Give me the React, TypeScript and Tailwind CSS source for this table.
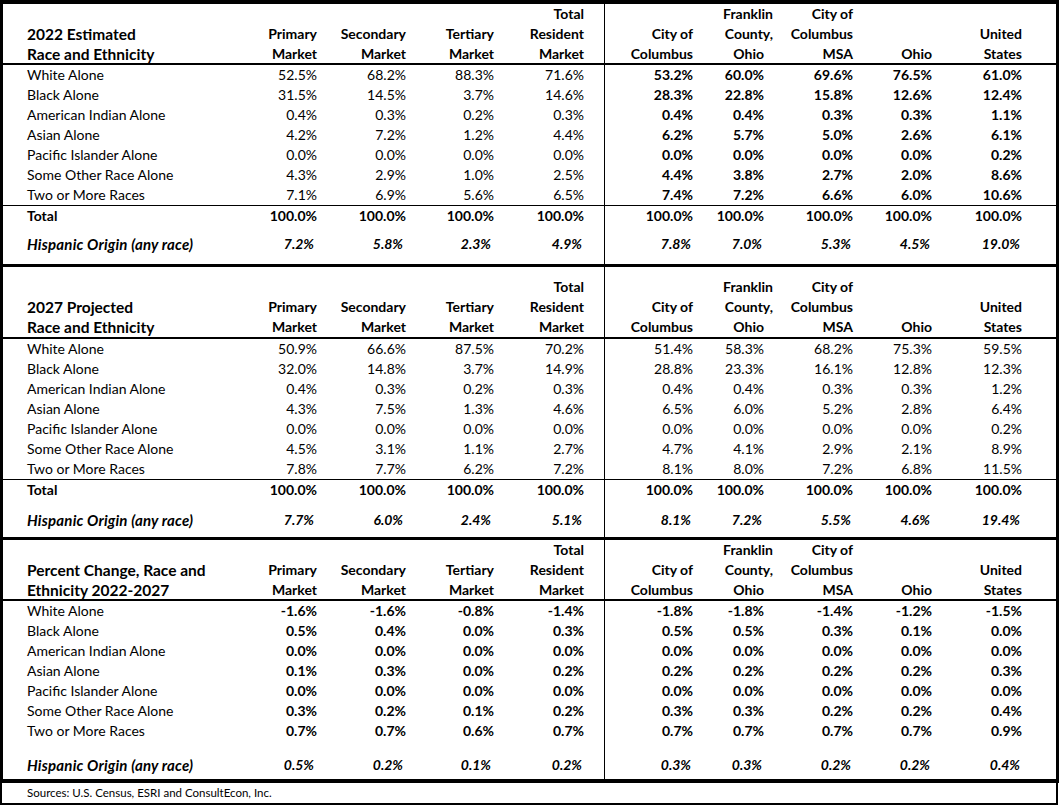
import React from "react";

const GRID =
  "grid grid-cols-[234px_85px_89px_88px_106px_93px_71px_89px_79px_119px]";

const PR = [
  "pr-[5px]",
  "pr-[5px]",
  "pr-[5px]",
  "pr-[20px] border-r border-black",
  "pr-[5px]",
  "pr-[5px]",
  "pr-[5px]",
  "pr-[5px]",
  "pr-[34px]",
];

const PR_IT = [
  "pr-[8px]",
  "pr-[8px]",
  "pr-[8px]",
  "pr-[22px] border-r border-black",
  "pr-[7px]",
  "pr-[7px]",
  "pr-[7px]",
  "pr-[7px]",
  "pr-[36px]",
];

const HEADERS: string[][] = [
  ["", "Primary", "Market"],
  ["", "Secondary", "Market"],
  ["", "Tertiary", "Market"],
  ["Total", "Resident", "Market"],
  ["", "City of", "Columbus"],
  ["Franklin", "County,", "Ohio"],
  ["City of", "Columbus", "MSA"],
  ["", "", "Ohio"],
  ["", "United", "States"],
];

const LABELS = [
  "White Alone",
  "Black Alone",
  "American Indian Alone",
  "Asian Alone",
  "Pacific Islander Alone",
  "Some Other Race Alone",
  "Two or More Races",
];

type Section = {
  title: [string, string];
  headerH: string;
  rows: string[][];
  boldLeft: boolean;
  boldRight: boolean;
  total: boolean;
  hisp: string[];
  hispH: string;
  hispPt: string;
};

const SECTIONS: Section[] = [
  {
    title: ["2022 Estimated", "Race and Ethnicity"],
    headerH: "h-[61px]",
    rows: [
      ["52.5%", "68.2%", "88.3%", "71.6%", "53.2%", "60.0%", "69.6%", "76.5%", "61.0%"],
      ["31.5%", "14.5%", "3.7%", "14.6%", "28.3%", "22.8%", "15.8%", "12.6%", "12.4%"],
      ["0.4%", "0.3%", "0.2%", "0.3%", "0.4%", "0.4%", "0.3%", "0.3%", "1.1%"],
      ["4.2%", "7.2%", "1.2%", "4.4%", "6.2%", "5.7%", "5.0%", "2.6%", "6.1%"],
      ["0.0%", "0.0%", "0.0%", "0.0%", "0.0%", "0.0%", "0.0%", "0.0%", "0.2%"],
      ["4.3%", "2.9%", "1.0%", "2.5%", "4.4%", "3.8%", "2.7%", "2.0%", "8.6%"],
      ["7.1%", "6.9%", "5.6%", "6.5%", "7.4%", "7.2%", "6.6%", "6.0%", "10.6%"],
    ],
    boldLeft: false,
    boldRight: true,
    total: true,
    hisp: ["7.2%", "5.8%", "2.3%", "4.9%", "7.8%", "7.0%", "5.3%", "4.5%", "19.0%"],
    hispH: "h-[38px]",
    hispPt: "pt-[8px]",
  },
  {
    title: ["2027 Projected", "Race and Ethnicity"],
    headerH: "h-[72px]",
    rows: [
      ["50.9%", "66.6%", "87.5%", "70.2%", "51.4%", "58.3%", "68.2%", "75.3%", "59.5%"],
      ["32.0%", "14.8%", "3.7%", "14.9%", "28.8%", "23.3%", "16.1%", "12.8%", "12.3%"],
      ["0.4%", "0.3%", "0.2%", "0.3%", "0.4%", "0.4%", "0.3%", "0.3%", "1.2%"],
      ["4.3%", "7.5%", "1.3%", "4.6%", "6.5%", "6.0%", "5.2%", "2.8%", "6.4%"],
      ["0.0%", "0.0%", "0.0%", "0.0%", "0.0%", "0.0%", "0.0%", "0.0%", "0.2%"],
      ["4.5%", "3.1%", "1.1%", "2.7%", "4.7%", "4.1%", "2.9%", "2.1%", "8.9%"],
      ["7.8%", "7.7%", "6.2%", "7.2%", "8.1%", "8.0%", "7.2%", "6.8%", "11.5%"],
    ],
    boldLeft: false,
    boldRight: false,
    total: true,
    hisp: ["7.7%", "6.0%", "2.4%", "5.1%", "8.1%", "7.2%", "5.5%", "4.6%", "19.4%"],
    hispH: "h-[37px]",
    hispPt: "pt-[10px]",
  },
  {
    title: ["Percent Change, Race and", "Ethnicity 2022-2027"],
    headerH: "h-[61px]",
    rows: [
      ["-1.6%", "-1.6%", "-0.8%", "-1.4%", "-1.8%", "-1.8%", "-1.4%", "-1.2%", "-1.5%"],
      ["0.5%", "0.4%", "0.0%", "0.3%", "0.5%", "0.5%", "0.3%", "0.1%", "0.0%"],
      ["0.0%", "0.0%", "0.0%", "0.0%", "0.0%", "0.0%", "0.0%", "0.0%", "0.0%"],
      ["0.1%", "0.3%", "0.0%", "0.2%", "0.2%", "0.2%", "0.2%", "0.2%", "0.3%"],
      ["0.0%", "0.0%", "0.0%", "0.0%", "0.0%", "0.0%", "0.0%", "0.0%", "0.0%"],
      ["0.3%", "0.2%", "0.1%", "0.2%", "0.3%", "0.3%", "0.2%", "0.2%", "0.4%"],
      ["0.7%", "0.7%", "0.6%", "0.7%", "0.7%", "0.7%", "0.7%", "0.7%", "0.9%"],
    ],
    boldLeft: true,
    boldRight: true,
    total: false,
    hisp: ["0.5%", "0.2%", "0.1%", "0.2%", "0.3%", "0.3%", "0.2%", "0.2%", "0.4%"],
    hispH: "h-[38px]",
    hispPt: "pt-[14px]",
  },
];

function HeaderRow({ s }: { s: Section }) {
  return (
    <div className={`${GRID} ${s.headerH} border-b-2 border-black`}>
      <div className="flex flex-col justify-end pl-[24px] text-[15.5px] font-bold leading-[20px] whitespace-nowrap">
        <div className="h-[20px]">{s.title[0]}</div>
        <div className="h-[20px]">{s.title[1]}</div>
      </div>
      {HEADERS.map((h, i) => (
        <div
          key={i}
          className={`flex flex-col justify-end items-end text-right text-[14px] font-bold leading-[20px] whitespace-nowrap ${PR[i]}`}
        >
          {h.map((t, j) => (
            <div
              key={j}
              className={`h-[20px] shrink-0 ${i === 5 && j < 2 ? "-mr-[9px]" : ""}`}
            >
              {t}
            </div>
          ))}
        </div>
      ))}
    </div>
  );
}

function DataRow({
  label,
  vals,
  boldLeft,
  boldRight,
  labelBold,
}: {
  label: string;
  vals: string[];
  boldLeft: boolean;
  boldRight: boolean;
  labelBold?: boolean;
}) {
  return (
    <div className={`${GRID} h-[20px] text-[14px] leading-[20px]`}>
      <div className={`pl-[24px] whitespace-nowrap ${labelBold ? "font-bold" : ""}`}>
        {label}
      </div>
      {vals.map((v, i) => (
        <div
          key={i}
          className={`text-right whitespace-nowrap ${PR[i]} ${
            (i < 4 ? boldLeft : boldRight) ? "font-bold" : ""
          }`}
        >
          {v}
        </div>
      ))}
    </div>
  );
}

function SectionBlock({ s }: { s: Section }) {
  return (
    <div>
      <HeaderRow s={s} />
      <div className={s.total ? "border-b border-black" : ""}>
        {s.rows.map((r, i) => (
          <DataRow
            key={i}
            label={LABELS[i]}
            vals={r}
            boldLeft={s.boldLeft}
            boldRight={s.boldRight}
          />
        ))}
      </div>
      {s.total && (
        <DataRow
          label="Total"
          vals={Array(9).fill("100.0%")}
          boldLeft
          boldRight
          labelBold
        />
      )}
      <div className={`${GRID} ${s.hispH} text-[14px] leading-[20px] font-bold italic`}>
        <div className={`pl-[24px] whitespace-nowrap text-[15px] tracking-[0.2px] ${s.hispPt}`}>
          Hispanic Origin (any race)
        </div>
        {s.hisp.map((v, i) => (
          <div key={i} className={`text-right whitespace-nowrap ${s.hispPt} ${PR_IT[i]}`}>
            {v}
          </div>
        ))}
      </div>
    </div>
  );
}

export default function App() {
  return (
    <div className="w-[1059px] h-[806px] bg-white text-black font-['Lato','Carlito',sans-serif]">
      <div className="border-t-4 border-x-[3px] border-black">
        <SectionBlock s={SECTIONS[0]} />
        <div className="h-[3px] bg-black" />
        <SectionBlock s={SECTIONS[1]} />
        <div className="h-[3px] bg-black" />
        <SectionBlock s={SECTIONS[2]} />
        <div className="h-[4px] bg-black" />
      </div>
      <div className="w-[1058px] h-[22px] border-x-2 border-b-2 border-black pl-[25px] text-[11.5px] leading-[20px]">
        Sources: U.S. Census, ESRI and ConsultEcon, Inc.
      </div>
    </div>
  );
}
